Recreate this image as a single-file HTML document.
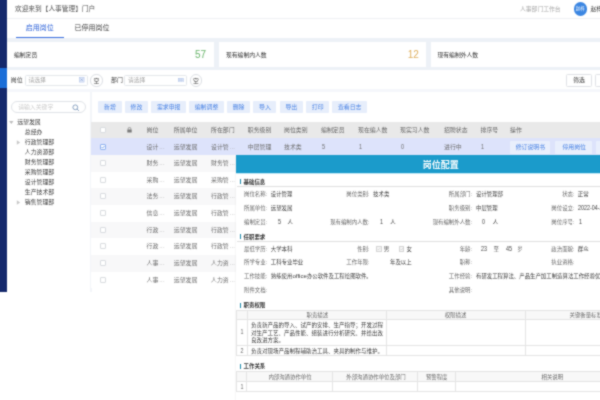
<!DOCTYPE html>
<html lang="zh-CN"><head><meta charset="utf-8"><title>岗位配置</title>
<style>
html,body{margin:0;padding:0;background:#fff;}
body{width:600px;height:400px;position:relative;overflow:hidden;font-family:"Liberation Sans","Noto Sans CJK SC",sans-serif;}
#root{position:absolute;left:0;top:0;width:600px;height:400px;overflow:hidden;background:#fff;filter:url(#soft);}
.b{position:absolute;display:block;}
.t{position:absolute;white-space:nowrap;line-height:10px;height:10px;display:block;}
.t.c{transform:translateX(-50%);}
.t.r{transform:translateX(-100%);}
.bld{font-weight:bold;}
</style></head><body><svg width="0" height="0" style="position:absolute"><defs><filter id="soft" x="0" y="0" width="100%" height="100%" color-interpolation-filters="sRGB"><feConvolveMatrix order="3" kernelMatrix="0.04 0.1 0.04 0.1 0.44 0.1 0.04 0.1 0.04" divisor="1" edgeMode="duplicate" preserveAlpha="true"/></filter></defs></svg><div id="root">
<div class="b" style="left:7px;top:0px;width:593px;height:292.3px;background:#edf1f7;"></div>
<div class="b" style="left:0px;top:0px;width:7px;height:292.4px;background:#15296c;"></div>
<div class="b" style="left:0px;top:67.5px;width:7px;height:20px;background:#1b6ed8;"></div>
<div class="b" style="left:7px;top:0px;width:593px;height:18.5px;background:#fff;"></div>
<span class="t " style="left:15px;top:3.80px;font-size:6.7px;color:#555;">欢迎来到【人事管理】门户</span>
<div class="b" style="left:7px;top:18px;width:593px;height:0.8px;background:#eff1f4;"></div>
<span class="t " style="left:520px;top:4.00px;font-size:5.8px;color:#aaa;">人事部门工作台</span>
<div class="b" style="left:573.5px;top:2px;width:13.5px;height:13.5px;border-radius:50%;background:#3b86e2"></div>
<span class="t c " style="left:580.2px;top:3.80px;font-size:4.4px;color:#fff;">赵梓</span>
<span class="t " style="left:590.5px;top:3.80px;font-size:5.8px;color:#333;">赵梓</span>
<div class="b" style="left:7px;top:19px;width:593px;height:19px;background:#fff;"></div>
<span class="t c " style="left:39.8px;top:23.10px;font-size:7.0px;color:#2d62d8;">启用岗位</span>
<span class="t " style="left:74.6px;top:23.10px;font-size:7.0px;color:#444;">已停用岗位</span>
<div class="b" style="left:15.6px;top:36.7px;width:48.6px;height:1.2px;background:#3a6fdf;"></div>
<div class="b" style="left:7px;top:42.3px;width:207.3px;height:25px;background:#fff;"></div>
<div class="b" style="left:219.3px;top:42.3px;width:207.2px;height:25px;background:#fff;"></div>
<div class="b" style="left:431px;top:42.3px;width:170px;height:25px;background:#fff;"></div>
<span class="t " style="left:14px;top:49.50px;font-size:5.8px;color:#333;">编制定员</span>
<span class="t " style="left:226px;top:49.50px;font-size:5.8px;color:#333;">现有编制内人数</span>
<span class="t " style="left:437.5px;top:49.50px;font-size:5.8px;color:#333;">现有编制外人数</span>
<span class="t " style="left:195px;top:49.80px;font-size:10px;color:#6ab56c;">57</span>
<span class="t " style="left:407.8px;top:49.80px;font-size:10px;color:#dfb060;">12</span>
<div class="b" style="left:7px;top:70.3px;width:593px;height:18.9px;background:#fff;"></div>
<div class="b" style="left:7px;top:89.2px;width:593px;height:2.9px;background:#f5f7fb;"></div>
<span class="t " style="left:10.8px;top:75.00px;font-size:5.9px;color:#444;">岗位</span>
<div class="b" style="left:25.3px;top:74.6px;width:62.4px;height:11.6px;background:#fff;border:0.6px solid #e4e7eb;border-radius:1.5px;box-sizing:border-box"></div>
<span class="t " style="left:28.5px;top:75.00px;font-size:5.8px;color:#a8a8a8;">请选择</span>
<svg class="b" style="left:79.4px;top:77.4px" width="5.4" height="5.4" viewBox="0 0 5.4 5.4"><rect x="0.3" y="0.3" width="4.8" height="4.8" fill="#e3eaf8" stroke="#a9bde6" stroke-width="0.5"/><path d="M1.6 1.6L3.8 3.8M3.8 1.6L1.6 3.8" stroke="#7f9ad6" stroke-width="0.6"/></svg>
<div class="b" style="left:90.4px;top:74.4px;width:12.2px;height:12.2px;background:#fff;border:0.6px solid #dcdfe4;border-radius:50%;box-sizing:border-box"></div>
<span class="t c " style="left:96.5px;top:75.60px;font-size:5.8px;color:#444;">空</span>
<span class="t " style="left:111px;top:75.00px;font-size:5.9px;color:#444;">部门</span>
<div class="b" style="left:124.3px;top:74.6px;width:62.4px;height:11.6px;background:#fff;border:0.6px solid #e4e7eb;border-radius:1.5px;box-sizing:border-box"></div>
<span class="t " style="left:128px;top:75.00px;font-size:5.8px;color:#a8a8a8;">请选择</span>
<svg class="b" style="left:178px;top:77.8px" width="5.6" height="4.6" viewBox="0 0 5.6 4.6"><rect x="0.3" y="0.3" width="5" height="4" fill="#e3eaf8" stroke="#a9bde6" stroke-width="0.5"/><path d="M2 0.3V4.3M3.7 0.3V4.3M0.3 2.3H5.3" stroke="#a9bde6" stroke-width="0.4"/></svg>
<div class="b" style="left:189.9px;top:74.4px;width:12.2px;height:12.2px;background:#fff;border:0.6px solid #dcdfe4;border-radius:50%;box-sizing:border-box"></div>
<span class="t c " style="left:196px;top:75.60px;font-size:5.8px;color:#444;">空</span>
<div class="b" style="left:566px;top:73.5px;width:26px;height:13px;background:#fff;border:0.6px solid #e0e2e6;border-radius:1.5px;box-sizing:border-box"></div>
<span class="t c " style="left:579px;top:75.00px;font-size:5.8px;color:#333;">筛选</span>
<div class="b" style="left:595px;top:73.5px;width:26px;height:13px;background:#fff;border:0.6px solid #e0e2e6;border-radius:1.5px;box-sizing:border-box"></div>
<div class="b" style="left:7px;top:92.1px;width:82.8px;height:199.9px;background:#fff;"></div>
<div class="b" style="left:89.8px;top:92.1px;width:2px;height:199.9px;background:#f3f5f9;"></div>
<div class="b" style="left:10.8px;top:101px;width:75px;height:12.2px;background:#fff;border:0.6px solid #e0e3e8;border-radius:7px;box-sizing:border-box"></div>
<span class="t " style="left:18.2px;top:102.20px;font-size:5.85px;color:#cbcbcb;">请输入关键字</span>
<svg class="b" style="left:72px;top:104px" width="8" height="8" viewBox="0 0 8 8"><circle cx="3.3" cy="3.3" r="2.4" fill="none" stroke="#6685ad" stroke-width="0.75"/><path d="M5.1 5.1L6.9 6.9" stroke="#6685ad" stroke-width="0.8" fill="none"/></svg>
<span class="t " style="left:17.2px;top:117.40px;font-size:5.9px;color:#3c3c3c;">远望发展</span>
<svg class="b" style="left:9px;top:120px" width="5" height="5" viewBox="0 0 5 5"><path d="M0.1 1.1L4.5 1.1L2.3 4.1Z" fill="#bdbdbd"/></svg>
<span class="t " style="left:24.8px;top:127.40px;font-size:5.9px;color:#3c3c3c;">总经办</span>
<span class="t " style="left:24.8px;top:137.35px;font-size:5.9px;color:#3c3c3c;">行政管理部</span>
<svg class="b" style="left:16.3px;top:139.85px" width="5" height="5" viewBox="0 0 5 5"><path d="M0.8 0.2L4.2 2.5L0.8 4.8Z" fill="#c8c8c8"/></svg>
<span class="t " style="left:24.8px;top:147.30px;font-size:5.9px;color:#3c3c3c;">人力资源部</span>
<span class="t " style="left:24.8px;top:157.25px;font-size:5.9px;color:#3c3c3c;">财务管理部</span>
<span class="t " style="left:24.8px;top:167.20px;font-size:5.9px;color:#3c3c3c;">采购管理部</span>
<span class="t " style="left:24.8px;top:177.15px;font-size:5.9px;color:#3c3c3c;">设计管理部</span>
<span class="t " style="left:24.8px;top:187.10px;font-size:5.9px;color:#3c3c3c;">生产技术部</span>
<span class="t " style="left:24.8px;top:197.05px;font-size:5.9px;color:#3c3c3c;">销售管理部</span>
<svg class="b" style="left:16.3px;top:199.55px" width="5" height="5" viewBox="0 0 5 5"><path d="M0.8 0.2L4.2 2.5L0.8 4.8Z" fill="#c8c8c8"/></svg>
<div class="b" style="left:91.8px;top:92.1px;width:508.2px;height:199.9px;background:#fff;"></div>
<div class="b" style="left:98.4px;top:100.8px;width:23.2px;height:12.4px;background:#e7eefb;border-radius:1px"></div>
<span class="t c " style="left:110.0px;top:102.10px;font-size:5.9px;color:#4a83e4;">新增</span>
<div class="b" style="left:124.9px;top:100.8px;width:23.2px;height:12.4px;background:#e7eefb;border-radius:1px"></div>
<span class="t c " style="left:136.5px;top:102.10px;font-size:5.9px;color:#4a83e4;">修改</span>
<div class="b" style="left:151.4px;top:100.8px;width:34.6px;height:12.4px;background:#e7eefb;border-radius:1px"></div>
<span class="t c " style="left:168.70000000000002px;top:102.10px;font-size:5.9px;color:#4a83e4;">需求申报</span>
<div class="b" style="left:189.2px;top:100.8px;width:34.6px;height:12.4px;background:#e7eefb;border-radius:1px"></div>
<span class="t c " style="left:206.5px;top:102.10px;font-size:5.9px;color:#4a83e4;">编制调整</span>
<div class="b" style="left:227px;top:100.8px;width:23.2px;height:12.4px;background:#e7eefb;border-radius:1px"></div>
<span class="t c " style="left:238.6px;top:102.10px;font-size:5.9px;color:#4a83e4;">删除</span>
<div class="b" style="left:253.3px;top:100.8px;width:23.2px;height:12.4px;background:#e7eefb;border-radius:1px"></div>
<span class="t c " style="left:264.90000000000003px;top:102.10px;font-size:5.9px;color:#4a83e4;">导入</span>
<div class="b" style="left:279.7px;top:100.8px;width:23.2px;height:12.4px;background:#e7eefb;border-radius:1px"></div>
<span class="t c " style="left:291.3px;top:102.10px;font-size:5.9px;color:#4a83e4;">导出</span>
<div class="b" style="left:306.1px;top:100.8px;width:23.2px;height:12.4px;background:#e7eefb;border-radius:1px"></div>
<span class="t c " style="left:317.70000000000005px;top:102.10px;font-size:5.9px;color:#4a83e4;">打印</span>
<div class="b" style="left:332.4px;top:100.8px;width:34.6px;height:12.4px;background:#e7eefb;border-radius:1px"></div>
<span class="t c " style="left:349.7px;top:102.10px;font-size:5.9px;color:#4a83e4;">查看日志</span>
<div class="b" style="left:91.3px;top:121.8px;width:508.7px;height:16.6px;background:#e9e9e9;"></div>
<span class="t " style="left:146.6px;top:125.30px;font-size:5.9px;color:#666;">岗位</span>
<span class="t " style="left:173.8px;top:125.30px;font-size:5.9px;color:#666;">所属单位</span>
<span class="t " style="left:211px;top:125.30px;font-size:5.9px;color:#666;">所在部门</span>
<span class="t " style="left:247.8px;top:125.30px;font-size:5.9px;color:#666;">职务级别</span>
<span class="t " style="left:284px;top:125.30px;font-size:5.9px;color:#666;">岗位类别</span>
<span class="t " style="left:321px;top:125.30px;font-size:5.9px;color:#666;">编制定员</span>
<span class="t " style="left:358px;top:125.30px;font-size:5.9px;color:#666;">现在编人数</span>
<span class="t " style="left:400px;top:125.30px;font-size:5.9px;color:#666;">现实习人数</span>
<span class="t " style="left:444px;top:125.30px;font-size:5.9px;color:#666;">招聘状态</span>
<span class="t " style="left:480.6px;top:125.30px;font-size:5.9px;color:#666;">排序号</span>
<span class="t " style="left:510px;top:125.30px;font-size:5.9px;color:#666;">操作</span>
<svg class="b" style="left:126.8px;top:127.2px" width="5" height="6" viewBox="0 0 5 6"><rect x="0.3" y="2.5" width="4.4" height="3.1" rx="0.3" fill="#7a7a7a"/><path d="M1.2 2.7V1.7a1.3 1.3 0 0 1 2.6 0V2.7" fill="none" stroke="#7a7a7a" stroke-width="0.7"/></svg>
<div class="b" style="left:100px;top:127px;width:6px;height:6px;background:#fff;border:1px solid #d9dce0;box-sizing:border-box;border-radius:1px"></div>
<div class="b" style="left:91.3px;top:138.4px;width:508.7px;height:16.65px;background:#dde3fb;"></div>
<div class="b" style="left:100px;top:144px;width:6px;height:6px;background:#fff;border:1px solid #8fb2ef;box-sizing:border-box;border-radius:1px"></div>
<svg class="b" style="left:100px;top:144px" width="6" height="6" viewBox="0 0 6 6"><path d="M1.5 3L2.6 4.1L4.6 1.9" fill="none" stroke="#4a83e4" stroke-width="0.7"/></svg>
<span class="t " style="left:146.6px;top:141.50px;font-size:5.9px;color:#6c6c6c;">设计<span style="color:#999;letter-spacing:0.3px;margin-left:0.8px">...</span></span>
<span class="t " style="left:173.8px;top:141.50px;font-size:5.9px;color:#6c6c6c;">远望发展</span>
<span class="t " style="left:211px;top:141.50px;font-size:5.9px;color:#6c6c6c;">设计管<span style="color:#999;letter-spacing:0.3px;margin-left:0.8px">...</span></span>
<span class="t " style="left:247.8px;top:141.50px;font-size:5.9px;color:#6c6c6c;">中层管理</span>
<span class="t " style="left:284px;top:141.50px;font-size:5.9px;color:#6c6c6c;">技术类</span>
<span class="t " style="left:321.5px;top:141.50px;font-size:6.1px;color:#6c6c6c;transform:scale(0.9,1.18);transform-origin:0 62%">5</span>
<span class="t " style="left:358.5px;top:141.50px;font-size:6.1px;color:#6c6c6c;transform:scale(0.9,1.18);transform-origin:0 62%">1</span>
<span class="t " style="left:401px;top:141.50px;font-size:6.1px;color:#6c6c6c;transform:scale(0.9,1.18);transform-origin:0 62%">0</span>
<span class="t " style="left:444px;top:141.50px;font-size:5.9px;color:#6c6c6c;">进行中</span>
<span class="t " style="left:481px;top:141.50px;font-size:6.1px;color:#6c6c6c;transform:scale(0.9,1.18);transform-origin:0 62%">1</span>
<div class="b" style="left:510.4px;top:141.2px;width:40px;height:12.4px;background:#e9effc;border-radius:1px"></div>
<span class="t c " style="left:530.4px;top:142.10px;font-size:5.9px;color:#4a83e4;">修订说明书</span>
<div class="b" style="left:554.8px;top:141.2px;width:37.6px;height:12.4px;background:#e9effc;border-radius:1px"></div>
<span class="t c " style="left:574.2px;top:142.10px;font-size:5.9px;color:#4a83e4;">停用岗位</span>
<div class="b" style="left:596px;top:141.2px;width:10px;height:12.4px;background:#e9effc;border-radius:1px"></div>
<div class="b" style="left:91.3px;top:155.05px;width:508.7px;height:16.65px;background:#f8f8f9;"></div>
<div class="b" style="left:100px;top:160px;width:6px;height:6px;background:#fff;border:1px solid #d9dce0;box-sizing:border-box;border-radius:1px"></div>
<span class="t " style="left:146.6px;top:158.15px;font-size:5.9px;color:#6c6c6c;">财务<span style="color:#999;letter-spacing:0.3px;margin-left:0.8px">...</span></span>
<span class="t " style="left:173.8px;top:158.15px;font-size:5.9px;color:#6c6c6c;">远望发展</span>
<span class="t " style="left:211px;top:158.15px;font-size:5.9px;color:#6c6c6c;">财务管<span style="color:#999;letter-spacing:0.3px;margin-left:0.8px">...</span></span>
<div class="b" style="left:91.3px;top:171.7px;width:508.7px;height:16.65px;background:#fff;"></div>
<div class="b" style="left:100px;top:177px;width:6px;height:6px;background:#fff;border:1px solid #d9dce0;box-sizing:border-box;border-radius:1px"></div>
<span class="t " style="left:146.6px;top:174.80px;font-size:5.9px;color:#6c6c6c;">采购<span style="color:#999;letter-spacing:0.3px;margin-left:0.8px">...</span></span>
<span class="t " style="left:173.8px;top:174.80px;font-size:5.9px;color:#6c6c6c;">远望发展</span>
<span class="t " style="left:211px;top:174.80px;font-size:5.9px;color:#6c6c6c;">采购管<span style="color:#999;letter-spacing:0.3px;margin-left:0.8px">...</span></span>
<div class="b" style="left:91.3px;top:188.35px;width:508.7px;height:16.65px;background:#f8f8f9;"></div>
<div class="b" style="left:100px;top:193px;width:6px;height:6px;background:#fff;border:1px solid #d9dce0;box-sizing:border-box;border-radius:1px"></div>
<span class="t " style="left:146.6px;top:191.45px;font-size:5.9px;color:#6c6c6c;">法务<span style="color:#999;letter-spacing:0.3px;margin-left:0.8px">...</span></span>
<span class="t " style="left:173.8px;top:191.45px;font-size:5.9px;color:#6c6c6c;">远望发展</span>
<span class="t " style="left:211px;top:191.45px;font-size:5.9px;color:#6c6c6c;">行政管<span style="color:#999;letter-spacing:0.3px;margin-left:0.8px">...</span></span>
<div class="b" style="left:91.3px;top:205.0px;width:508.7px;height:16.65px;background:#fff;"></div>
<div class="b" style="left:100px;top:210px;width:6px;height:6px;background:#fff;border:1px solid #d9dce0;box-sizing:border-box;border-radius:1px"></div>
<span class="t " style="left:146.6px;top:208.10px;font-size:5.9px;color:#6c6c6c;">信息<span style="color:#999;letter-spacing:0.3px;margin-left:0.8px">...</span></span>
<span class="t " style="left:173.8px;top:208.10px;font-size:5.9px;color:#6c6c6c;">远望发展</span>
<span class="t " style="left:211px;top:208.10px;font-size:5.9px;color:#6c6c6c;">行政管<span style="color:#999;letter-spacing:0.3px;margin-left:0.8px">...</span></span>
<div class="b" style="left:91.3px;top:221.65px;width:508.7px;height:16.65px;background:#f8f8f9;"></div>
<div class="b" style="left:100px;top:227px;width:6px;height:6px;background:#fff;border:1px solid #d9dce0;box-sizing:border-box;border-radius:1px"></div>
<span class="t " style="left:146.6px;top:224.75px;font-size:5.9px;color:#6c6c6c;">行政<span style="color:#999;letter-spacing:0.3px;margin-left:0.8px">...</span></span>
<span class="t " style="left:173.8px;top:224.75px;font-size:5.9px;color:#6c6c6c;">远望发展</span>
<span class="t " style="left:211px;top:224.75px;font-size:5.9px;color:#6c6c6c;">行政管<span style="color:#999;letter-spacing:0.3px;margin-left:0.8px">...</span></span>
<div class="b" style="left:91.3px;top:238.3px;width:508.7px;height:16.65px;background:#fff;"></div>
<div class="b" style="left:100px;top:243px;width:6px;height:6px;background:#fff;border:1px solid #d9dce0;box-sizing:border-box;border-radius:1px"></div>
<span class="t " style="left:146.6px;top:241.40px;font-size:5.9px;color:#6c6c6c;">行政<span style="color:#999;letter-spacing:0.3px;margin-left:0.8px">...</span></span>
<span class="t " style="left:173.8px;top:241.40px;font-size:5.9px;color:#6c6c6c;">远望发展</span>
<span class="t " style="left:211px;top:241.40px;font-size:5.9px;color:#6c6c6c;">行政管<span style="color:#999;letter-spacing:0.3px;margin-left:0.8px">...</span></span>
<div class="b" style="left:91.3px;top:254.95px;width:508.7px;height:16.65px;background:#f8f8f9;"></div>
<div class="b" style="left:100px;top:260px;width:6px;height:6px;background:#fff;border:1px solid #d9dce0;box-sizing:border-box;border-radius:1px"></div>
<span class="t " style="left:146.6px;top:258.05px;font-size:5.9px;color:#6c6c6c;">人事<span style="color:#999;letter-spacing:0.3px;margin-left:0.8px">...</span></span>
<span class="t " style="left:173.8px;top:258.05px;font-size:5.9px;color:#6c6c6c;">远望发展</span>
<span class="t " style="left:211px;top:258.05px;font-size:5.9px;color:#6c6c6c;">人力资<span style="color:#999;letter-spacing:0.3px;margin-left:0.8px">...</span></span>
<div class="b" style="left:91.3px;top:271.6px;width:508.7px;height:16.65px;background:#fff;"></div>
<div class="b" style="left:100px;top:277px;width:6px;height:6px;background:#fff;border:1px solid #d9dce0;box-sizing:border-box;border-radius:1px"></div>
<span class="t " style="left:146.6px;top:274.70px;font-size:5.9px;color:#6c6c6c;">人事<span style="color:#999;letter-spacing:0.3px;margin-left:0.8px">...</span></span>
<span class="t " style="left:173.8px;top:274.70px;font-size:5.9px;color:#6c6c6c;">远望发展</span>
<span class="t " style="left:211px;top:274.70px;font-size:5.9px;color:#6c6c6c;">人力资<span style="color:#999;letter-spacing:0.3px;margin-left:0.8px">...</span></span>
<div class="b" style="left:236.2px;top:155.5px;width:364px;height:245px;background:#fff;box-shadow:0 0 2px rgba(0,0,0,0.09)"></div>
<div class="b" style="left:236.2px;top:155.4px;width:364px;height:17.9px;background:#1b9bcb;"></div>
<div class="b" style="left:236.2px;top:173.3px;width:364px;height:0.8px;background:#c4e9f6;"></div>
<span class="t c bld" style="left:440.7px;top:159.60px;font-size:9px;color:#fff;">岗位配置</span>
<div class="b" style="left:239.6px;top:179.20000000000002px;width:1.9px;height:5.2px;background:#1a88aa;"></div>
<span class="t bld" style="left:243.5px;top:176.80px;font-size:5.45px;color:#333;">基础信息</span>
<div class="b" style="left:236.5px;top:185.8px;width:363.5px;height:0.6px;background:#dfdfdf;"></div>
<span class="t r" style="left:267.2px;top:189.10px;font-size:5.42px;color:#686868">岗位名称:</span>
<span class="t " style="left:270.8px;top:189.10px;font-size:5.42px;color:#3a3a3a;">设计管理</span>
<span class="t r" style="left:369.5px;top:189.10px;font-size:5.42px;color:#686868">岗位类别:</span>
<span class="t " style="left:373.1px;top:189.10px;font-size:5.42px;color:#3a3a3a;">技术类</span>
<span class="t r" style="left:472px;top:189.10px;font-size:5.42px;color:#686868">所属部门:</span>
<span class="t " style="left:476px;top:189.10px;font-size:5.42px;color:#3a3a3a;">设计管理部</span>
<span class="t r" style="left:574.5px;top:189.10px;font-size:5.42px;color:#686868">状态:</span>
<span class="t " style="left:577.8px;top:189.10px;font-size:5.42px;color:#3a3a3a;">正常</span>
<span class="t r" style="left:267.2px;top:202.90px;font-size:5.42px;color:#686868">所属单位:</span>
<span class="t " style="left:270.8px;top:202.90px;font-size:5.42px;color:#3a3a3a;">远望发展</span>
<span class="t r" style="left:472px;top:202.90px;font-size:5.42px;color:#686868">职务级别:</span>
<span class="t " style="left:476px;top:202.90px;font-size:5.42px;color:#3a3a3a;">中层管理</span>
<span class="t r" style="left:574.5px;top:202.90px;font-size:5.42px;color:#686868">岗位设立:</span>
<span class="t " style="left:577.8px;top:202.90px;font-size:6.0px;color:#3a3a3a;transform:scale(0.9,1.2);transform-origin:0 62%">2022-04-21</span>
<span class="t r" style="left:267.2px;top:216.50px;font-size:5.42px;color:#686868">编制定员:</span>
<span class="t " style="left:277.5px;top:216.50px;font-size:6.0px;color:#444;transform:scale(0.9,1.2);transform-origin:0 62%">5</span>
<span class="t " style="left:287.5px;top:216.50px;font-size:5.42px;color:#3a3a3a;">人</span>
<span class="t r" style="left:369.5px;top:216.50px;font-size:5.42px;color:#686868">现有编制内人数:</span>
<span class="t " style="left:380.3px;top:216.50px;font-size:6.0px;color:#444;transform:scale(0.9,1.2);transform-origin:0 62%">1</span>
<span class="t " style="left:390.3px;top:216.50px;font-size:5.42px;color:#3a3a3a;">人</span>
<span class="t r" style="left:472px;top:216.50px;font-size:5.42px;color:#686868">现有编制外人数:</span>
<span class="t " style="left:482.3px;top:216.50px;font-size:6.0px;color:#444;transform:scale(0.9,1.2);transform-origin:0 62%">0</span>
<span class="t " style="left:492.8px;top:216.50px;font-size:5.42px;color:#3a3a3a;">人</span>
<span class="t r" style="left:574.5px;top:216.50px;font-size:5.42px;color:#686868">岗位序号:</span>
<span class="t " style="left:578.5px;top:216.50px;font-size:6.0px;color:#3a3a3a;transform:scale(0.9,1.2);transform-origin:0 62%">1</span>
<div class="b" style="left:239.6px;top:234.20000000000002px;width:1.9px;height:5.2px;background:#1a88aa;"></div>
<span class="t bld" style="left:243.5px;top:231.80px;font-size:5.45px;color:#333;">任职要求</span>
<div class="b" style="left:236.5px;top:241.2px;width:363.5px;height:0.6px;background:#dfdfdf;"></div>
<span class="t r" style="left:267.2px;top:243.80px;font-size:5.42px;color:#686868">最低学历:</span>
<span class="t " style="left:270.8px;top:243.80px;font-size:5.42px;color:#3a3a3a;">大学本科</span>
<span class="t r" style="left:369.5px;top:243.80px;font-size:5.42px;color:#686868">性别:</span>
<div class="b" style="left:376.2px;top:245.9px;width:5.8px;height:5.8px;background:#f6f6f6;border:0.5px solid #d4d4d4;box-sizing:border-box;border-radius:0.5px"></div>
<svg class="b" style="left:376.2px;top:245.9px" width="5.8" height="5.8" viewBox="0 0 5.8 5.8"><path d="M1.5 2.9L2.5 3.9L4.4 1.9" fill="none" stroke="#c2c2c2" stroke-width="0.6"/></svg>
<span class="t " style="left:383.7px;top:243.80px;font-size:5.42px;color:#3a3a3a;">男</span>
<div class="b" style="left:398.5px;top:245.9px;width:5.8px;height:5.8px;background:#f6f6f6;border:0.5px solid #d4d4d4;box-sizing:border-box;border-radius:0.5px"></div>
<svg class="b" style="left:398.5px;top:245.9px" width="5.8" height="5.8" viewBox="0 0 5.8 5.8"><path d="M1.5 2.9L2.5 3.9L4.4 1.9" fill="none" stroke="#c2c2c2" stroke-width="0.6"/></svg>
<span class="t " style="left:406.4px;top:243.80px;font-size:5.42px;color:#3a3a3a;">女</span>
<span class="t r" style="left:472px;top:243.80px;font-size:5.42px;color:#686868">年龄:</span>
<span class="t " style="left:480.6px;top:243.80px;font-size:6.0px;color:#444;transform:scale(0.9,1.2);transform-origin:0 62%">23</span>
<span class="t " style="left:493.6px;top:243.80px;font-size:5.42px;color:#555;">至</span>
<span class="t " style="left:505.6px;top:243.80px;font-size:6.0px;color:#444;transform:scale(0.9,1.2);transform-origin:0 62%">45</span>
<span class="t " style="left:517.2px;top:243.80px;font-size:5.42px;color:#686868;">岁</span>
<span class="t r" style="left:574.5px;top:243.80px;font-size:5.42px;color:#686868">政治面貌:</span>
<span class="t " style="left:577.8px;top:243.80px;font-size:5.42px;color:#3a3a3a;">群众</span>
<span class="t r" style="left:267.2px;top:257.30px;font-size:5.42px;color:#686868">所学专业:</span>
<span class="t " style="left:270.8px;top:257.30px;font-size:5.42px;color:#3a3a3a;">工科专业毕业</span>
<span class="t r" style="left:369.5px;top:257.30px;font-size:5.42px;color:#686868">工作年限:</span>
<span class="t " style="left:390px;top:257.30px;font-size:5.42px;color:#3a3a3a;">年及以上</span>
<span class="t r" style="left:472px;top:257.30px;font-size:5.42px;color:#686868">职称:</span>
<span class="t r" style="left:574.5px;top:257.30px;font-size:5.42px;color:#686868">执业资格:</span>
<span class="t r" style="left:267.2px;top:270.80px;font-size:5.42px;color:#686868">工作技能:</span>
<span class="t " style="left:270.8px;top:270.80px;font-size:5.42px;color:#3a3a3a;">熟练使用<span style="font-size:6.1px">office</span>办公软件及工程绘图软件。</span>
<span class="t r" style="left:472px;top:270.80px;font-size:5.42px;color:#686868">工作经验:</span>
<span class="t " style="left:476px;top:270.80px;font-size:5.42px;color:#3a3a3a;">有研发工程算法、产品生产加工制造算法工作经验优先</span>
<span class="t r" style="left:267.2px;top:284.60px;font-size:5.42px;color:#686868">附件文档:</span>
<span class="t r" style="left:472px;top:284.60px;font-size:5.42px;color:#686868">其他说明:</span>
<div class="b" style="left:239.6px;top:302.5px;width:1.9px;height:5.2px;background:#1a88aa;"></div>
<span class="t bld" style="left:243.5px;top:300.10px;font-size:5.45px;color:#333;">职责权限</span>
<div class="b" style="left:236.4px;top:310.6px;width:363.6px;height:9.099999999999966px;background:#f8f8f8;"></div>
<div class="b" style="left:236.4px;top:310.3px;width:363.6px;height:0.6px;background:#e4e4e4;"></div>
<div class="b" style="left:236.4px;top:319.4px;width:363.6px;height:0.6px;background:#e4e4e4;"></div>
<div class="b" style="left:236.4px;top:345.09999999999997px;width:363.6px;height:0.6px;background:#e4e4e4;"></div>
<div class="b" style="left:236.4px;top:355.3px;width:363.6px;height:0.6px;background:#e4e4e4;"></div>
<div class="b" style="left:236.29999999999998px;top:310.6px;width:0.6px;height:45.0px;background:#e4e4e4;"></div>
<div class="b" style="left:247.29999999999998px;top:310.6px;width:0.6px;height:45.0px;background:#e4e4e4;"></div>
<div class="b" style="left:385.7px;top:310.6px;width:0.6px;height:45.0px;background:#e4e4e4;"></div>
<div class="b" style="left:524.5px;top:310.6px;width:0.6px;height:45.0px;background:#e4e4e4;"></div>
<span class="t c " style="left:317.3px;top:310.20px;font-size:5.42px;color:#686868;">职责描述</span>
<span class="t c " style="left:455.5px;top:310.20px;font-size:5.42px;color:#686868;">权限描述</span>
<span class="t " style="left:569.5px;top:310.20px;font-size:5.42px;color:#686868;">关键衡量标准</span>
<span class="t c " style="left:241.8px;top:327.30px;font-size:6.0px;color:#686868;transform:translateX(-50%) scale(0.9,1.2);transform-origin:50% 62%">1</span>
<span class="t " style="left:251px;top:320.20px;font-size:5.5px;color:#3a3a3a;">负责新产品的导入、试产的安排、生产指导；开发过程</span>
<span class="t " style="left:251px;top:327.60px;font-size:5.5px;color:#3a3a3a;">对生产工艺、产品性能、组装进行分析研究、并给出改</span>
<span class="t " style="left:251px;top:335.00px;font-size:5.5px;color:#3a3a3a;">良改进方案。</span>
<span class="t c " style="left:241.8px;top:346.00px;font-size:6.0px;color:#686868;transform:translateX(-50%) scale(0.9,1.2);transform-origin:50% 62%">2</span>
<span class="t " style="left:251px;top:346.00px;font-size:5.5px;color:#3a3a3a;">负责对现场产品制程辅助治工具、夹具的制作与维护。</span>
<div class="b" style="left:239.6px;top:363.7px;width:1.9px;height:5.2px;background:#1a88aa;"></div>
<span class="t bld" style="left:243.5px;top:361.30px;font-size:5.45px;color:#333;">工作关系</span>
<div class="b" style="left:236.4px;top:371.7px;width:363.6px;height:9.300000000000011px;background:#f8f8f8;"></div>
<div class="b" style="left:236.4px;top:371.4px;width:363.6px;height:0.6px;background:#e4e4e4;"></div>
<div class="b" style="left:236.4px;top:380.7px;width:363.6px;height:0.6px;background:#e4e4e4;"></div>
<div class="b" style="left:236.4px;top:391.4px;width:363.6px;height:0.6px;background:#e4e4e4;"></div>
<div class="b" style="left:236.29999999999998px;top:371.7px;width:0.6px;height:20.0px;background:#e4e4e4;"></div>
<div class="b" style="left:246.39999999999998px;top:371.7px;width:0.6px;height:20.0px;background:#e4e4e4;"></div>
<div class="b" style="left:332.4px;top:371.7px;width:0.6px;height:20.0px;background:#e4e4e4;"></div>
<div class="b" style="left:417.0px;top:371.7px;width:0.6px;height:20.0px;background:#e4e4e4;"></div>
<div class="b" style="left:454.7px;top:371.7px;width:0.6px;height:20.0px;background:#e4e4e4;"></div>
<span class="t c " style="left:290px;top:371.50px;font-size:5.42px;color:#686868;">内部沟通协作单位</span>
<span class="t c " style="left:376px;top:371.50px;font-size:5.42px;color:#686868;">外部沟通协作单位及部门</span>
<span class="t c " style="left:436.7px;top:371.50px;font-size:5.42px;color:#686868;">预警程度</span>
<span class="t c " style="left:552.3px;top:371.50px;font-size:5.42px;color:#686868;">相关说明</span>
<span class="t c " style="left:241.8px;top:381.50px;font-size:6.0px;color:#686868;transform:translateX(-50%) scale(0.9,1.2);transform-origin:50% 62%">1</span>
</div></body></html>
